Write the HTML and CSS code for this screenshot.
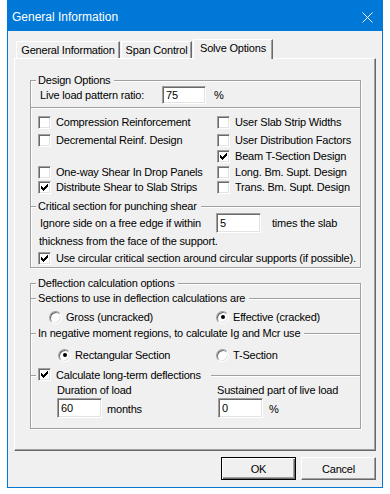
FILE: index.html
```html
<!DOCTYPE html>
<html lang="en">
<head>
    <meta charset="UTF-8">
    <title>General Information</title>
    <link rel="stylesheet" href="styles.css">
</head>
<body>
<div class="window">
    <div class="titlebar">
        <span>General Information</span>
        <svg class="close" width="11" height="11" viewBox="0 0 11 11"><path d="M0.5 0.5L10.5 10.5M10.5 0.5L0.5 10.5" stroke="#ffffff" stroke-width="1"/></svg>
    </div>
    <div class="client">
        <div class="tabs">
            <div class="tab t1">General Information</div>
            <div class="tab t2">Span Control</div>
            <div class="tab active">Solve Options</div>
        </div>
        <div class="panel">
            <div class="group g1">
                <div class="sect s-design">
                    <div class="cap"><span>Design Options</span></div>
                    <div class="row ratio">
                        <span class="lbl">Live load pattern ratio:</span>
                        <input class="edit e-ratio" type="text" value="75">
                        <span class="pct">%</span>
                    </div>
                </div>
                <div class="sect s-checks">
                    <label class="check"><span class="box"></span>Compression Reinforcement</label>
                    <label class="check"><span class="box"></span>Decremental Reinf. Design</label>
                    <div></div>
                    <label class="check"><span class="box"></span>One-way Shear In Drop Panels</label>
                    <label class="check"><span class="box on"><svg width="7" height="7" viewBox="0 0 7 7"><path d="M0 2H1V3H2V4H3V3H4V2H5V1H6V0H7V3H6V4H5V5H4V6H3V7H2V6H1V5H0Z"/></svg></span>Distribute Shear to Slab Strips</label>
                    <label class="check"><span class="box"></span>User Slab Strip Widths</label>
                    <label class="check"><span class="box"></span>User Distribution Factors</label>
                    <label class="check"><span class="box on"><svg width="7" height="7" viewBox="0 0 7 7"><path d="M0 2H1V3H2V4H3V3H4V2H5V1H6V0H7V3H6V4H5V5H4V6H3V7H2V6H1V5H0Z"/></svg></span>Beam T-Section Design</label>
                    <label class="check"><span class="box"></span>Long. Bm. Supt. Design</label>
                    <label class="check"><span class="box"></span>Trans. Bm. Supt. Design</label>
                </div>
                <div class="sect s-punch">
                    <div class="cap"><span>Critical section for punching shear</span></div>
                    <div class="row ignore">
                        <span class="lbl">Ignore side on a free edge if within</span>
                        <input class="edit e-num" type="text" value="5">
                        <span class="times">times the slab</span>
                    </div>
                    <div class="thick">thickness from the face of the support.</div>
                    <label class="check"><span class="box on"><svg width="7" height="7" viewBox="0 0 7 7"><path d="M0 2H1V3H2V4H3V3H4V2H5V1H6V0H7V3H6V4H5V5H4V6H3V7H2V6H1V5H0Z"/></svg></span>Use circular critical section around circular supports (if possible).</label>
                </div>
            </div>

            <div class="group g2">
                <div class="sect s-defl">
                    <div class="cap"><span>Deflection calculation options</span></div>
                </div>
                <div class="sect s-sec">
                    <div class="cap"><span>Sections to use in deflection calculations are</span></div>
                    <div class="radios">
                        <label class="opt"><span class="radio"></span>Gross (uncracked)</label>
                        <label class="opt"><span class="radio on"></span>Effective (cracked)</label>
                    </div>
                </div>
                <div class="sect s-neg">
                    <div class="cap"><span>In negative moment regions, to calculate Ig and Mcr use</span></div>
                    <div class="radios">
                        <label class="opt"><span class="radio on"></span>Rectangular Section</label>
                        <label class="opt"><span class="radio"></span>T-Section</label>
                    </div>
                </div>
                <div class="sect s-long">
                    <div class="cap cap-check">
                        <label class="check"><span class="box on"><svg width="7" height="7" viewBox="0 0 7 7"><path d="M0 2H1V3H2V4H3V3H4V2H5V1H6V0H7V3H6V4H5V5H4V6H3V7H2V6H1V5H0Z"/></svg></span>Calculate long-term deflections</label>
                    </div>
                    <div class="long">
                        <span class="lbl">Duration of load</span>
                        <span class="lbl">Sustained part of live load</span>
                        <div class="row"><input class="edit e-num" type="text" value="60"><span class="months">months</span></div>
                        <div class="row sust"><input class="edit e-num" type="text" value="0"><span class="pct2">%</span></div>
                    </div>
                </div>
            </div>
        </div>
        <div class="buttons">
            <button class="btn default">OK</button>
            <button class="btn">Cancel</button>
        </div>
    </div>
</div>
</body>
</html>
```

FILE: styles.css
```css
* {
    box-sizing: border-box;
}

body {
    margin: 0;
    background: #ffffff;
    font-family: "Liberation Sans", Arial, sans-serif;
    font-size: 11px;
    letter-spacing: -0.2px;
    color: #000000;
}

label {
    cursor: default;
}

.window {
    width: 376px;
    height: 488px;
    margin-left: 7px;
    border: 1px solid #0078d7;
    background: #f0f0f0;
}

/* title bar */

.titlebar {
    height: 30px;
    display: flex;
    align-items: center;
    justify-content: space-between;
    padding: 1px 9px 0 4px;
    background: #0078d7;
    color: #ffffff;
    font-size: 12px;
    letter-spacing: 0;
}

.close {
    display: block;
    margin-top: 2px;
}

.client {
    padding: 0 6px;
}

/* tabs */

.tabs {
    display: flex;
    align-items: flex-end;
    height: 27px;
    padding-left: 2px;
}

.tab {
    height: 17px;
    line-height: 16px;
    text-align: center;
    border-top: 1px solid #ffffff;
    border-left: 1px solid #ffffff;
    border-right: 1px solid #696969;
    box-shadow: inset -1px 0 #a0a0a0;
}

.t1 {
    width: 104px;
}

.t2 {
    width: 71px;
    margin-left: 1px;
}

.tab.active {
    width: 80px;
    height: 20px;
    margin-left: 1px;
    margin-bottom: -1px;
    padding-bottom: 3px;
    position: relative;
    z-index: 1;
    background: #f0f0f0;
}

.panel {
    width: 362px;
    height: 393px;
    border: 1px solid;
    border-color: #ffffff #696969 #696969 #ffffff;
    box-shadow: inset -1px -1px #a0a0a0;
    padding: 21px 0 0 15px;
}

/* group boxes */

.group {
    width: 331px;
    border: 1px solid #a0a0a0;
    box-shadow: inset 1px 1px #ffffff, 1px 1px #ffffff;
}

.g1 {
    height: 188px;
}

.g2 {
    height: 146px;
    margin-top: 15px;
}

.sect {
    display: flow-root;
}

.sect + .sect {
    border-top: 1px solid #a0a0a0;
    box-shadow: inset 0 1px #ffffff;
}

.cap {
    height: 12px;
    margin-top: -7px;
    line-height: 12px;
}

.cap > span {
    display: inline-block;
    margin-left: 5px;
    padding: 0 4px 0 2px;
    background: #f0f0f0;
}

.row {
    display: flex;
    align-items: center;
}

/* inputs */

.edit {
    display: block;
    margin: 0;
    padding: 0 0 0 3px;
    background: #ffffff;
    border: 1px solid;
    border-color: #a0a0a0 #ffffff #ffffff #a0a0a0;
    box-shadow: inset 1px 1px #696969, inset -1px -1px #e3e3e3;
    font: inherit;
    letter-spacing: inherit;
    color: #000000;
    outline: none;
}

.e-ratio {
    width: 44px;
    height: 18px;
}

.e-num {
    width: 45px;
    height: 20px;
}

.box {
    flex: none;
    display: block;
    width: 13px;
    height: 13px;
    margin-right: 5px;
    padding: 2px 0 0 2px;
    background: #ffffff;
    border: 1px solid;
    border-color: #a0a0a0 #ffffff #ffffff #a0a0a0;
    box-shadow: inset 1px 1px #696969, inset -1px -1px #e3e3e3;
}

.box svg {
    display: block;
}

.check {
    display: flex;
    align-items: center;
    height: 16px;
    white-space: nowrap;
}

.radio {
    flex: none;
    display: flex;
    align-items: center;
    justify-content: center;
    width: 13px;
    height: 13px;
    margin-right: 4px;
    border-radius: 50%;
    background: #ffffff;
    border: 1px solid;
    border-color: #a0a0a0 #ffffff #ffffff #a0a0a0;
    box-shadow: inset 1px 1px #696969, inset -1px -1px #e3e3e3;
}

.radio.on::after {
    content: "";
    width: 4px;
    height: 4px;
    border-radius: 50%;
    background: #000000;
}

/* design options */

.s-design {
    height: 26px;
}

.ratio {
    height: 18px;
    padding-left: 9px;
}

.ratio .lbl {
    width: 122px;
}

.pct {
    margin-left: 8px;
}

.s-checks {
    height: 99px;
    padding: 6px 0 0 7px;
    display: grid;
    grid-template-columns: 179px auto;
    grid-template-rows: 18px 16px 16px 15px 16px;
    grid-auto-flow: column;
}

/* punching shear */

.s-punch {
    height: 61px;
}

.ignore {
    height: 21px;
    padding-left: 9px;
}

.ignore .lbl {
    width: 176px;
}

.ignore .edit {
    align-self: flex-end;
}

.times {
    margin-left: 11px;
}

.thick {
    height: 17px;
    line-height: 17px;
    padding-left: 8px;
}

.s-punch .check {
    padding-left: 7px;
}

/* deflection */

.s-defl {
    height: 14px;
}

.s-sec {
    height: 35px;
}

.s-neg {
    height: 42px;
}

.s-long {
    height: 53px;
}

.radios {
    display: flex;
    height: 16px;
}

.opt {
    display: flex;
    align-items: center;
}

.s-sec .radios {
    margin-top: 5px;
    padding-left: 18px;
}

.s-sec .opt:first-child {
    width: 167px;
}

.s-neg .radios {
    margin-top: 8px;
    padding-left: 27px;
}

.s-neg .opt:first-child {
    width: 158px;
}

.cap-check {
    height: 13px;
    margin-top: -8px;
}

.cap-check .check {
    display: inline-flex;
    height: 13px;
    margin-left: 5px;
    padding: 0 10px 0 2px;
    background: #f0f0f0;
}

.long {
    display: grid;
    grid-template-columns: 160px auto;
    grid-template-rows: 14px 20px;
    row-gap: 1px;
    margin-top: 2px;
    padding-left: 26px;
}

.long .lbl {
    line-height: 14px;
}

.sust .edit {
    margin-left: 1px;
}

.months {
    margin-left: 5px;
    padding-top: 2px;
}

.pct2 {
    margin-left: 6px;
    padding-top: 2px;
}

/* buttons */

.buttons {
    display: flex;
    justify-content: flex-end;
    gap: 5px;
    margin-top: 6px;
}

.btn {
    width: 75px;
    height: 23px;
    padding: 0;
    background: #f0f0f0;
    border: 1px solid;
    border-color: #ffffff #696969 #696969 #ffffff;
    box-shadow: inset -1px -1px #a0a0a0;
    font: inherit;
    letter-spacing: inherit;
    color: #000000;
}

.btn.default {
    border-color: #000000;
    box-shadow: inset 1px 1px #ffffff, inset -1px -1px #696969, inset -2px -2px #a0a0a0;
}
```
